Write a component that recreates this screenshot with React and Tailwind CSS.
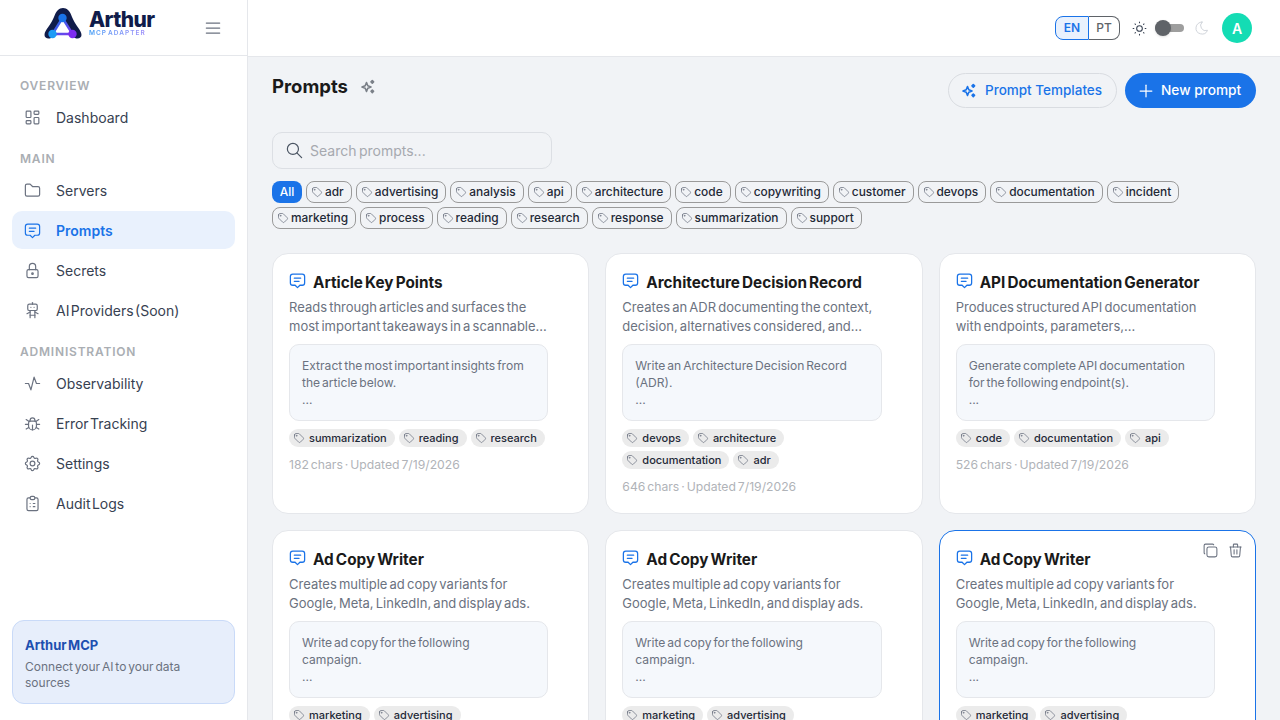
import { TbLayoutDashboard, TbFolder, TbMessage2, TbLock, TbRobot, TbActivity, TbBug, TbSettings, TbClipboardList, TbTag, TbSearch, TbPlus, TbCopy, TbTrash, TbSun, TbMoon, TbMenu2 } from "react-icons/tb";

const nav = [
  { title: "OVERVIEW", items: [{ label: "Dashboard", icon: TbLayoutDashboard }] },
  {
    title: "MAIN",
    items: [
      { label: "Servers", icon: TbFolder },
      { label: "Prompts", icon: TbMessage2, active: true },
      { label: "Secrets", icon: TbLock },
      { label: "AI Providers (Soon)", icon: TbRobot },
    ],
  },
  {
    title: "ADMINISTRATION",
    items: [
      { label: "Observability", icon: TbActivity },
      { label: "Error Tracking", icon: TbBug },
      { label: "Settings", icon: TbSettings },
      { label: "Audit Logs", icon: TbClipboardList },
    ],
  },
];

const filters = ["adr", "advertising", "analysis", "api", "architecture", "code", "copywriting", "customer", "devops", "documentation", "incident", "marketing", "process", "reading", "research", "response", "summarization", "support"];

const adCopy = {
  title: "Ad Copy Writer",
  desc: ["Creates multiple ad copy variants for", "Google, Meta, LinkedIn, and display ads."],
  prompt: ["Write ad copy for the following", "campaign."],
  tags: ["marketing", "advertising"],
  meta: "",
};

const cards = [
  {
    title: "Article Key Points",
    desc: ["Reads through articles and surfaces the", "most important takeaways in a scannable..."],
    prompt: ["Extract the most important insights from", "the article below."],
    tags: ["summarization", "reading", "research"],
    meta: "182 chars · Updated 7/19/2026",
  },
  {
    title: "Architecture Decision Record",
    desc: ["Creates an ADR documenting the context,", "decision, alternatives considered, and..."],
    prompt: ["Write an Architecture Decision Record", "(ADR)."],
    tags: ["devops", "architecture", "documentation", "adr"],
    meta: "646 chars · Updated 7/19/2026",
  },
  {
    title: "API Documentation Generator",
    desc: ["Produces structured API documentation", "with endpoints, parameters,..."],
    prompt: ["Generate complete API documentation", "for the following endpoint(s)."],
    tags: ["code", "documentation", "api"],
    meta: "526 chars · Updated 7/19/2026",
  },
  adCopy,
  adCopy,
  { ...adCopy, hover: true },
];

function SparkIcon({ className }) {
  return (
    <svg width="15" height="15" viewBox="0 0 15 15" className={className}>
      <path d="M5.5 3.5 L6.8 6.7 L10 8 L6.8 9.3 L5.5 12.5 L4.2 9.3 L1 8 L4.2 6.7 Z" fill="none" stroke="currentColor" strokeWidth="1.6" strokeLinejoin="round" />
      <rect x="9.6" y="1.2" width="3.4" height="3.4" rx="0.8" transform="rotate(45 11.3 2.9)" fill="currentColor" />
      <rect x="9.6" y="10.6" width="3.4" height="3.4" rx="0.8" transform="rotate(45 11.3 12.3)" fill="currentColor" />
    </svg>
  );
}

function Logo() {
  return (
    <div className="mb-[10px] flex items-start gap-[7px]">
      <svg width="38" height="32" viewBox="0 0 38 32">
        <defs>
          <linearGradient id="tri" x1="0" y1="0" x2="1" y2="1">
            <stop offset="0" stopColor="#1a73e8" />
            <stop offset="1" stopColor="#7c3aed" />
          </linearGradient>
        </defs>
        <path d="M0.5 28 C0.5 23 7 18 10 10 C12 4 15 1 19 1 C23 1 26 4 28 10 C31 18 37.5 23 37.5 28 C37.5 31 34 32.5 31 31 C28 29.5 25 27 19 27 C13 27 10 29.5 7 31 C4 32.5 0.5 31 0.5 28Z" fill="#101c4a" />
        <path d="M18.5 11 L8.5 27 L28.5 27 Z" fill="#ffffff" stroke="url(#tri)" strokeWidth="2.4" strokeLinejoin="round" />
        <circle cx="18.5" cy="11" r="4.2" fill="#1a73e8" />
        <circle cx="8.5" cy="27" r="4.2" fill="#1e9bf5" />
        <circle cx="28.5" cy="27" r="4.2" fill="#7c2cf0" />
      </svg>
      <div className="flex flex-col pt-[2px]">
        <span className="text-[21px] leading-[21px] font-extrabold tracking-[-0.6px] text-[#101c4a]">Arthur</span>
        <span className="bg-gradient-to-r from-[#3b9bf5] to-[#a78bfa] bg-clip-text text-[6.5px] leading-[7px] font-semibold tracking-[1px] text-transparent">MCP ADAPTER</span>
      </div>
    </div>
  );
}

function Sidebar() {
  return (
    <aside className="flex w-[248px] shrink-0 flex-col border-r border-[#e5e7eb] bg-white">
      <div className="flex h-[56px] items-center justify-between border-b border-[#e5e7eb] pr-[24px] pl-[44px]">
        <Logo />
        <TbMenu2 size={20} strokeWidth={1.5} className="text-[#6b7280]" />
      </div>
      <nav className="flex-1 px-3 pt-[21px]">
        {nav.map((group) => (
          <div key={group.title} className="mb-[14px]">
            <div className="mb-[3px] h-[18px] px-2 text-[12px] leading-[18px] font-semibold tracking-[0.8px] text-[#aaaeb3]">{group.title}</div>
            <div className="flex flex-col gap-[2px]">
              {group.items.map((item) => (
                <a key={item.label} className={`flex h-[38px] items-center gap-[14px] rounded-[10px] pl-[11px] text-[14px] [word-spacing:-2.5px] ${item.active ? "bg-[#e9f1fd] font-semibold text-[#1a73e8]" : "text-[#374151]"}`}>
                  <item.icon size={19} strokeWidth={1.5} className={item.active ? "text-[#1a73e8]" : "text-[#6b7280]"} />
                  {item.label}
                </a>
              ))}
            </div>
          </div>
        ))}
      </nav>
      <div className="mx-3 mb-4 h-[84px] rounded-[12px] border border-[#c9daf8] bg-[#e7eefb] px-3 pt-[15px]">
        <div className="text-[13px] leading-[18px] font-bold text-[#1d4fb0]">Arthur MCP</div>
        <div className="mt-[5px] text-[12px] leading-[16px] text-[#6b7280]">Connect your AI to your data sources</div>
      </div>
    </aside>
  );
}

function Header() {
  return (
    <header className="flex h-[57px] shrink-0 items-center justify-end gap-[12px] border-b border-[#e5e7eb] bg-white pr-[28px]">
      <div className="flex h-[24px] text-[12px] font-medium">
        <span className="flex w-[34px] items-center justify-center rounded-l-[8px] border border-[#1a73e8] bg-[#e9f1fd] font-semibold text-[#1a73e8]">EN</span>
        <span className="flex w-[31px] items-center justify-center rounded-r-[8px] border border-l-0 border-[#5f6368] text-[#5f6368]">PT</span>
      </div>
      <div className="flex items-center gap-[8px]">
        <TbSun size={17} strokeWidth={1.5} className="-mx-[1px] text-[#374151]" />
        <div className="relative h-[8px] w-[29px] rounded-full bg-[#9e9e9e]">
          <span className="absolute top-[-4px] left-0 h-[16px] w-[16px] rounded-full bg-[#5f6368] shadow"></span>
        </div>
      </div>
      <TbMoon size={16} strokeWidth={1.5} className="-ml-[2px] text-[#d1d5db]" />
      <div className="flex h-[30px] w-[30px] items-center justify-center rounded-full bg-[#14dcb4] text-[14px] font-semibold text-white">A</div>
    </header>
  );
}

function FilterChip({ label }) {
  return (
    <span className="flex h-[22px] items-center gap-[2px] rounded-[8px] border border-[#9a9a9a] pr-[7px] pl-[4px] text-[11.9px] font-medium text-[#1f2937]">
      <TbTag size={12} strokeWidth={1.5} className="text-[#6b7280]" />
      {label}
    </span>
  );
}

function PromptCard({ card }) {
  return (
    <div className={`relative rounded-[16px] border bg-white pt-[17px] pr-[40px] pb-[18px] pl-[16px] ${card.hover ? "border-[#1a73e8]" : "border-[#e5e7eb]"}`}>
      {card.hover && (
        <div className="absolute top-[11px] right-[11px] flex gap-[8px] text-[#6b7280]">
          <TbCopy size={17} strokeWidth={1.5} />
          <TbTrash size={17} strokeWidth={1.5} />
        </div>
      )}
      <div className="flex h-[23px] items-start gap-[6px]">
        <TbMessage2 size={19} strokeWidth={1.6} className="-ml-[1px] text-[#1a73e8]" />
        <span className="text-[15.3px] leading-[24px] font-bold whitespace-nowrap text-[#1a1a1a]">{card.title}</span>
      </div>
      <div className="mt-[4px] text-[13px] leading-[19px] whitespace-nowrap text-[#6b7280]">
        {card.desc.map((line) => <div key={line}>{line}</div>)}
      </div>
      <div className="mt-[8px] h-[77px] rounded-[10px] border border-[#e5e7eb] bg-[#f5f8fc] px-[12px] pt-[12px] text-[12.1px] leading-[17px] whitespace-nowrap text-[#6b7280]">
        {card.prompt.map((line) => <div key={line}>{line}</div>)}
        <div>...</div>
      </div>
      <div className="mt-[8px] flex flex-wrap gap-[4px]">
        {card.tags.map((tag) => (
          <span key={tag} className="flex h-[18px] items-center gap-[4px] rounded-full bg-[#ebebeb] pr-[8px] pl-[4px] text-[11px] font-medium text-[#1f2937]">
            <TbTag size={12} strokeWidth={1.5} className="text-[#6b7280]" />
            {tag}
          </span>
        ))}
      </div>
      <div className="mt-[9px] text-[12.2px] leading-[17px] text-[#b0b3b8]">{card.meta}</div>
    </div>
  );
}

export default function App() {
  return (
    <div className="flex h-screen overflow-hidden bg-[#f1f3f6] font-['Inter',sans-serif] [word-spacing:-1.5px]">
      <Sidebar />
      <div className="flex min-w-0 flex-1 flex-col">
        <Header />
        <main className="flex-1 overflow-hidden px-[24px] pt-[16px]">
          <div className="flex h-[35px] items-start justify-between">
            <div className="flex items-center gap-[13px]">
              <h1 className="text-[18.5px] leading-[26px] font-bold text-[#1a1a1a]">Prompts</h1>
              <SparkIcon className="text-[#7b8088]" />
            </div>
            <div className="flex gap-[8px]">
              <button className="flex h-[35px] w-[169px] items-center gap-[8px] rounded-full border border-[#d9dce1] pl-[13px] text-[13.5px] font-medium text-[#1a73e8]">
                <SparkIcon />
                Prompt Templates
              </button>
              <button className="flex h-[35px] w-[131px] items-center gap-[5px] rounded-full bg-[#1a73e8] pl-[11px] text-[13.7px] font-medium text-white">
                <TbPlus size={20} strokeWidth={1.5} />
                New prompt
              </button>
            </div>
          </div>
          <div className="mt-[24px] flex h-[37px] w-[280px] items-center gap-[6px] rounded-[10px] border border-[#dcdfe4] pl-[12px] text-[14px] text-[#a6a9af]">
            <TbSearch size={19} strokeWidth={1.5} className="text-[#4b5563]" />
            Search prompts...
          </div>
          <div className="mt-[12px] flex flex-wrap gap-[4px]">
            <span className="flex h-[22px] w-[30px] items-center justify-center rounded-[8px] bg-[#1a73e8] text-[12px] font-medium text-white">All</span>
            {filters.map((f) => <FilterChip key={f} label={f} />)}
          </div>
          <div className="mt-[24px] grid grid-cols-3 gap-[16px]">
            {cards.map((card, i) => <PromptCard key={i} card={card} />)}
          </div>
        </main>
      </div>
    </div>
  );
}
